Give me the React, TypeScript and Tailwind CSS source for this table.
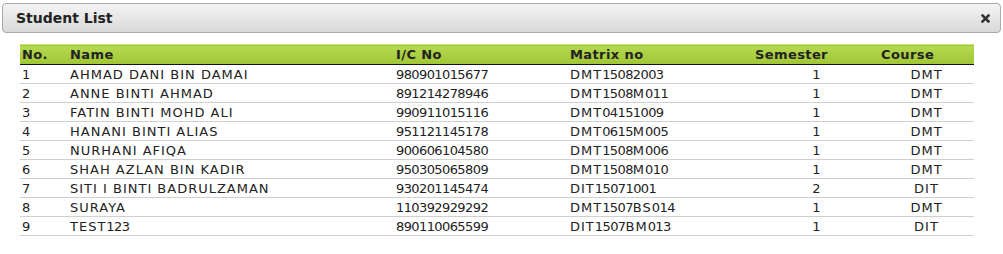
const students = [
  { no: 1, name: "AHMAD DANI BIN DAMAI", ic: "980901015677", matrix: "DMT15082003", sem: 1, course: "DMT" },
  { no: 2, name: "ANNE BINTI AHMAD", ic: "891214278946", matrix: "DMT1508M011", sem: 1, course: "DMT" },
  { no: 3, name: "FATIN BINTI MOHD ALI", ic: "990911015116", matrix: "DMT04151009", sem: 1, course: "DMT" },
  { no: 4, name: "HANANI BINTI ALIAS", ic: "951121145178", matrix: "DMT0615M005", sem: 1, course: "DMT" },
  { no: 5, name: "NURHANI AFIQA", ic: "900606104580", matrix: "DMT1508M006", sem: 1, course: "DMT" },
  { no: 6, name: "SHAH AZLAN BIN KADIR", ic: "950305065809", matrix: "DMT1508M010", sem: 1, course: "DMT" },
  { no: 7, name: "SITI I BINTI BADRULZAMAN", ic: "930201145474", matrix: "DIT15071001", sem: 2, course: "DIT" },
  { no: 8, name: "SURAYA", ic: "110392929292", matrix: "DMT1507BS014", sem: 1, course: "DMT" },
  { no: 9, name: "TEST123", ic: "890110065599", matrix: "DIT1507BM013", sem: 1, course: "DIT" },
];

// digits sit tighter than capitals in the original font
function Txt({ value }: { value: string | number }) {
  const parts = String(value).split(/(\d+)/).filter(Boolean);
  return (
    <>
      {parts.map((p, i) =>
        /^\d+$/.test(p) ? (
          <span key={i} className="tracking-[-0.6px]">{p}</span>
        ) : (
          <span key={i}>{p}</span>
        )
      )}
    </>
  );
}

export default function App() {
  return (
    <div
      className="w-[1003px] h-[254px] bg-white text-[#222] overflow-hidden"
      style={{ fontFamily: '"DejaVu Sans", Verdana, sans-serif' }}
    >
      <div className="pt-[3px] pl-[2px] pr-[2px]">
        <div className="h-[30px] flex items-center justify-between rounded-[4px] border border-[#aaa] bg-gradient-to-b from-[#f4f4f4] to-[#d9d9d9] pl-[13px] pr-[10px]">
          <span className="text-[14px] font-bold">Student List</span>
          <svg width="9" height="9" viewBox="0 0 9 9" className="text-[#333]">
            <path d="M1.5 1.5 L7.5 7.5 M7.5 1.5 L1.5 7.5" stroke="currentColor" strokeWidth="2.5" strokeLinecap="square" />
          </svg>
        </div>
      </div>

      <div className="pl-[20px] pt-[11px]">
        <table className="w-[954px] table-fixed border-collapse text-[13px] leading-none tracking-[1px]">
          <colgroup>
            <col className="w-[48px]" />
            <col className="w-[326px]" />
            <col className="w-[174px]" />
            <col className="w-[185px]" />
            <col className="w-[126px]" />
            <col className="w-[95px]" />
          </colgroup>
          <thead>
            <tr className="h-[20px] bg-gradient-to-b from-[#b5d84f] to-[#a0c737] border-t border-t-[#cbe488] border-b border-b-[#111] tracking-[0.4px]">
              <th className="text-left pl-[2px] font-bold">No.</th>
              <th className="text-left pl-[2px] font-bold">Name</th>
              <th className="text-left pl-[2px] font-bold">I/C No</th>
              <th className="text-left pl-[2px] font-bold">Matrix no</th>
              <th className="text-left pl-[2px] font-bold">Semester</th>
              <th className="text-left pl-[2px] font-bold">Course</th>
            </tr>
          </thead>
          <tbody>
            {students.map((s) => (
              <tr key={s.no} className="h-[19px] border-b border-b-[#cfcfcf]">
                <td className="pl-[2px]"><Txt value={s.no} /></td>
                <td className="pl-[2px]"><Txt value={s.name} /></td>
                <td className="pl-[2px]"><Txt value={s.ic} /></td>
                <td className="pl-[2px]"><Txt value={s.matrix} /></td>
                <td className="text-center"><Txt value={s.sem} /></td>
                <td className="text-center"><Txt value={s.course} /></td>
              </tr>
            ))}
          </tbody>
        </table>
      </div>
    </div>
  );
}
